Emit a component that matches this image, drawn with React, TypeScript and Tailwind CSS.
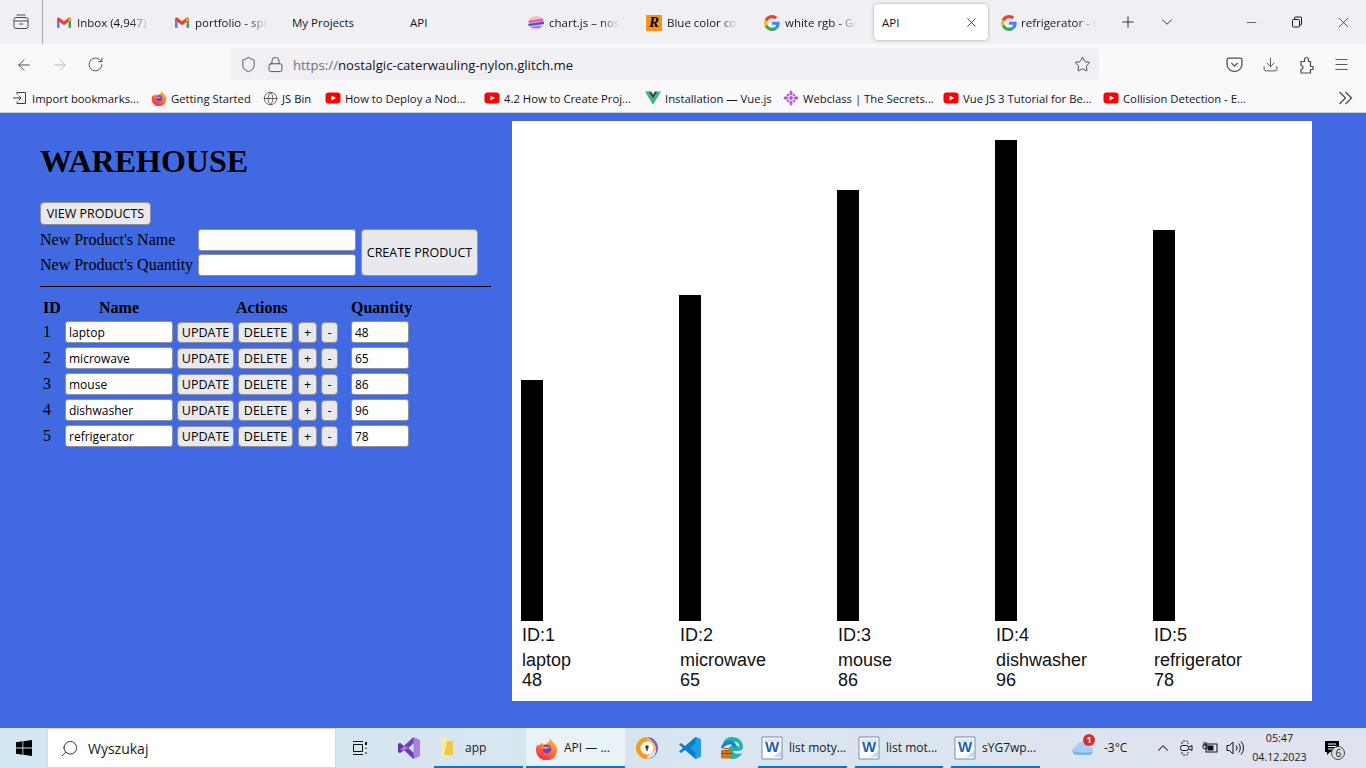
import React from "react";
import {
  ArrowLeft,
  ArrowRight,
  RotateCw,
  Shield,
  Lock,
  Star,
  Download,
  Menu,
  X,
  Plus,
  ChevronDown,
  ChevronUp,
  Minus,
  Globe,
  Search,
} from "lucide-react";

const products = [
  { id: 1, name: "laptop", quantity: 48, barHeight: "h-[241px]" },
  { id: 2, name: "microwave", quantity: 65, barHeight: "h-[326px]" },
  { id: 3, name: "mouse", quantity: 86, barHeight: "h-[431px]" },
  { id: 4, name: "dishwasher", quantity: 96, barHeight: "h-[481px]" },
  { id: 5, name: "refrigerator", quantity: 78, barHeight: "h-[391px]" },
];

const btn = "shrink-0 border border-[#8f8f9d] rounded-[4px] bg-[#e9e9ed] pt-[2px] font-['Open_Sans',sans-serif] text-black text-[12.5px] leading-none";
const field = "shrink-0 border border-[#8f8f9d] rounded-[3px] bg-white font-['Open_Sans',sans-serif] text-black text-[12px] px-[3px] outline-none";

function Gmail() {
  return (
    <svg width="16" height="16" viewBox="0 0 16 16" className="shrink-0">
      <path d="M1 13V4.500L3.500 5V13H2a1 1 0 0 1-1-1z" fill="#4285f4" />
      <path d="M12.500 13V5l2.500-.5V12a1 1 0 0 1-1 1z" fill="#34a853" />
      <path d="M1 5V4c0-1.300 1.500-2 2.500-1.200L8 6.300l4.500-3.500C13.500 2 15 2.700 15 4v1l-2.500 2L8 10.300 3.500 7z" fill="#ea4335" />
      <path d="M12.500 2.800 15 4v1l-2.500 2z" fill="#fbbc04" />
    </svg>
  );
}

function GoogleG() {
  return (
    <svg width="16" height="16" viewBox="0 0 48 48" className="shrink-0">
      <path fill="#ea4335" d="M24 9.500c3.500 0 6.700 1.200 9.200 3.600l6.900-6.900C35.900 2.400 30.500 0 24 0 14.600 0 6.500 5.400 2.600 13.200l8 6.200C12.400 13.700 17.700 9.500 24 9.500z" />
      <path fill="#4285f4" d="M47 24.500c0-1.600-.1-3.100-.4-4.500H24v9h13c-.6 3-2.300 5.500-4.800 7.200l7.700 6C44.400 38 47 31.800 47 24.500z" />
      <path fill="#fbbc05" d="M10.500 28.600c-.5-1.400-.8-3-.8-4.600s.3-3.200.8-4.600l-8-6.200C.9 16.500 0 20.100 0 24s.9 7.500 2.600 10.800z" />
      <path fill="#34a853" d="M24 48c6.500 0 11.900-2.100 15.900-5.800l-7.700-6c-2.200 1.500-5 2.300-8.200 2.300-6.300 0-11.600-4.200-13.500-10l-8 6.200C6.500 42.600 14.600 48 24 48z" />
    </svg>
  );
}

function YouTube() {
  return (
    <svg width="16" height="16" viewBox="0 0 16 16" className="shrink-0">
      <rect x="0.500" y="2.500" width="15" height="11" rx="3" fill="#ff0000" />
      <path d="M6.500 5.500v5L11 8z" fill="#fff" />
    </svg>
  );
}

function FirefoxLogo({ size = 16, id }: { size?: number; id: string }) {
  return (
    <svg width={size} height={size} viewBox="0 0 24 24" className="shrink-0">
      <defs>
        <linearGradient id={id} x1="0.800" y1="0" x2="0.200" y2="1">
          <stop offset="0" stopColor="#ffc32e" />
          <stop offset="0.450" stopColor="#ff7a2f" />
          <stop offset="1" stopColor="#f0245e" />
        </linearGradient>
      </defs>
      <path d="M15.500 0.500c.5 2.500 2 3.500 3.500 5 2.500 2.500 4 5 4 8a11 11 0 0 1-22 0c0-2.500.7-4.500 2-6 .2 1 .5 1.500 1 2 .8-2 2-3 4-3.500-.5 1-.5 1.500 0 2 3-.5 5-1 6.500-3 .7-1.300 1-3 1-4.500z" fill={`url(#${id})`} />
      <circle cx="12.500" cy="12.500" r="4.500" fill="#6a3fc9" />
      <path d="M5.500 10c2 .5 3.500.5 5.500.2 2-.3 4-.2 5.500 1.800-1.500-.5-2.500-.5-3.500 0-2 1-5.500.5-7.500-2z" fill="#ffa436" />
      <path d="M17 15c-1 2.500-3 3.500-5 3.500-2.500 0-4.500-1.500-5-3.500 2 2 6.500 2.500 10 0z" fill="#ff5a3c" />
    </svg>
  );
}

function WordIcon() {
  return (
    <svg width="22" height="24" viewBox="0 0 22 24" className="shrink-0">
      <path d="M1 1h20v22H1z" fill="#fdfdff" stroke="#6f8fbd" />
      <path d="M3 3h16v3H3z" fill="#dbe6f5" />
      <path d="M12 21l8-6v6z" fill="#cfd8e6" />
      <text x="11" y="16" textAnchor="middle" fontSize="15" fontWeight="700" fontFamily="Liberation Sans" fill="#2660b5">W</text>
    </svg>
  );
}

function PuzzleIcon() {
  return (
    <svg width="16" height="18" viewBox="0 0 16 18" fill="none" stroke="currentColor" strokeWidth="1.200">
      <path d="M3 5.500h3.500V3.500a2 2 0 0 1 4 0v2h2v5H15v3h-2.500v3.500H3v-3.500a2 2 0 0 0 0-4z" />
    </svg>
  );
}

const tabs = [
  { key: "inbox", icon: <Gmail />, label: "Inbox (4,947) -", fade: true },
  { key: "portfolio", icon: <Gmail />, label: "portfolio - sph", fade: true },
  { key: "projects", icon: null, label: "My Projects", fade: false },
  { key: "api1", icon: null, label: "API", fade: false },
  {
    key: "chart",
    icon: (
      <svg width="16" height="16" viewBox="0 0 16 16" className="shrink-0">
        <ellipse cx="8" cy="8" rx="8" ry="7" fill="#f3c1d8" />
        <path d="M1 5.500 15 3.500v2.500L1 8z" fill="#ef5b8f" />
        <path d="M0 9l16-2.500v2.500L1 11z" fill="#4a4fe0" />
        <path d="M3 12l10-1.500-1 2.500H4z" fill="#7c83f0" />
      </svg>
    ),
    label: "chart.js – nost",
    fade: true,
  },
  {
    key: "blue",
    icon: (
      <span className="flex h-4 w-4 shrink-0 items-center justify-center bg-[#f7941e] font-['Liberation_Serif'] text-[15px] font-bold italic leading-none text-black">
        R
      </span>
    ),
    label: "Blue color coc",
    fade: true,
  },
  { key: "white", icon: <GoogleG />, label: "white rgb - Go", fade: true },
];

const bookmarks = [
  { key: "import", w: "w-[139px]", label: "Import bookmarks...", icon: <svg width="16" height="16" viewBox="0 0 16 16" fill="none" stroke="#3a3a44" strokeWidth="1" className="shrink-0"><path d="M5 2.500h8.500v11H5M5 4.500v-2M5 13.500v-2M1 8h8M6.500 5.500 9 8l-2.500 2.500" /></svg> },
  { key: "started", w: "w-[112px]", label: "Getting Started", icon: <FirefoxLogo id="ff-bookmark" /> },
  { key: "jsbin", w: "w-[62px]", label: "JS Bin", icon: <Globe size={15} strokeWidth={1.2} className="shrink-0 text-[#3a3a44]" /> },
  { key: "deploy", w: "w-[159px]", label: "How to Deploy a Nod...", icon: <YouTube /> },
  { key: "create", w: "w-[161px]", label: "4.2 How to Create Proj...", icon: <YouTube /> },
  {
    key: "vue",
    w: "w-[138px]",
    label: "Installation — Vue.js",
    icon: (
      <svg width="16" height="16" viewBox="0 0 16 16" className="shrink-0">
        <path d="M0 1.500h3.500L8 9l4.500-7.500H16L8 15z" fill="#41b883" />
        <path d="M3.500 1.500h2.700L8 4.500l1.800-3h2.700L8 9z" fill="#35495e" />
      </svg>
    ),
  },
  {
    key: "webclass",
    w: "w-[160px]",
    label: "Webclass | The Secrets...",
    icon: (
      <svg width="16" height="16" viewBox="0 0 16 16" fill="#b35fd6" className="shrink-0">
        <ellipse cx="8" cy="3" rx="1.600" ry="2.500" />
        <ellipse cx="8" cy="13" rx="1.600" ry="2.500" />
        <ellipse cx="8" cy="8" rx="2" ry="2" />
        <ellipse cx="3" cy="8" rx="2.500" ry="1.800" />
        <ellipse cx="13" cy="8" rx="2.500" ry="1.800" />
        <circle cx="5" cy="5" r="1.300" />
        <circle cx="11" cy="5" r="1.300" />
        <circle cx="5" cy="11" r="1.300" />
        <circle cx="11" cy="11" r="1.300" />
      </svg>
    ),
  },
  { key: "vue3", w: "w-[160px]", label: "Vue JS 3 Tutorial for Be...", icon: <YouTube /> },
  { key: "collision", w: "w-[160px]", label: "Collision Detection - E...", icon: <YouTube /> },
];

function TabStrip() {
  return (
    <div className="flex h-[44px] items-center bg-[#f0f0f4] text-[11.5px] text-[#15141a]">
      <div className="flex h-full w-[43px] shrink-0 items-center justify-center border-r border-[#a9a9ad]">
        <svg width="16" height="16" viewBox="0 0 16 16" fill="none" stroke="#4a4a55" strokeWidth="1">
          <rect x="1" y="3.500" width="14" height="11" rx="2" />
          <path d="M3.500 1h9M1 7h14M6 10h4" />
        </svg>
      </div>
      {tabs.map((t) => (
        <div key={t.key} className="flex h-full w-[118px] shrink-0 items-center gap-[5px] pl-[13px] pt-[1px]">
          {t.icon}
          <span className={t.fade ? "whitespace-nowrap [mask-image:linear-gradient(to_right,black_70%,transparent_95%)]" : "whitespace-nowrap"}>
            {t.label}
          </span>
        </div>
      ))}
      <div className="ml-[5px] flex h-[36px] w-[114px] shrink-0 items-center justify-between rounded-[4px] bg-white pl-[8px] pr-[9px] pt-[1px] shadow-[0_0_3px_rgba(0,0,0,0.35)]">
        <span>API</span>
        <X size={15} strokeWidth={1.2} />
      </div>
      <div className="flex h-full w-[118px] shrink-0 items-center gap-[4px] pl-[13px] pt-[1px]">
        <GoogleG />
        <span className="whitespace-nowrap [mask-image:linear-gradient(to_right,black_70%,transparent_95%)]">refrigerator - G</span>
      </div>
      <div className="ml-[2px] flex w-[40px] justify-center"><Plus size={18} strokeWidth={1.1} /></div>
      <div className="flex w-[38px] justify-center"><ChevronDown size={18} strokeWidth={1.1} /></div>
      <div className="ml-auto flex items-center">
        <div className="flex w-[46px] justify-center"><Minus size={15} strokeWidth={1} /></div>
        <div className="flex w-[46px] justify-center">
          <svg width="12" height="12" viewBox="0 0 12 12" fill="none" stroke="#15141a" strokeWidth="1">
            <rect x="1.500" y="3.500" width="7" height="7.500" rx="1" />
            <path d="M3.500 3.500V2a1 1 0 0 1 1-1h5a1 1 0 0 1 1 1v6a1 1 0 0 1-1 1h-1" />
          </svg>
        </div>
        <div className="flex w-[46px] justify-center"><X size={17} strokeWidth={1} /></div>
      </div>
    </div>
  );
}

function NavBar() {
  return (
    <div className="flex h-[40px] items-center bg-[#f9f9fb] text-[#4a4a55]">
      <div className="flex w-[231px] shrink-0 items-center pl-[15px] pt-[1px]">
        <ArrowLeft size={18} strokeWidth={1.3} />
        <ArrowRight size={18} strokeWidth={1.3} className="ml-[18px] text-[#b8b8be]" />
        <RotateCw size={17} strokeWidth={1.3} className="ml-[18px]" />
      </div>
      <div className="flex h-[32px] w-[868px] shrink-0 items-center rounded-[4px] bg-[#f0f0f4] pl-[9px] pr-[8px] pt-[1px]">
        <Shield size={17} strokeWidth={1.3} />
        <Lock size={17} strokeWidth={1.3} className="ml-[10px]" />
        <span className="ml-[9px] pt-[2px] text-[13.2px] text-[#15141a]">
          <span className="text-[#6f6f78]">https://</span>nostalgic-caterwauling-nylon.glitch.me
        </span>
        <Star size={17} strokeWidth={1.3} className="ml-auto text-[#3a3a44]" />
      </div>
      <div className="ml-auto flex items-center gap-[19px] pr-[16px] pt-[1px]">
        <svg width="17" height="17" viewBox="0 0 16 16" fill="none" stroke="currentColor" strokeWidth="1.200">
          <path d="M2.500 2h11A1.500 1.500 0 0 1 15 3.500V8a7 6.500 0 0 1-14 0V3.500A1.500 1.500 0 0 1 2.500 2z" />
          <path d="M5 6.500 8 9.500l3-3" />
        </svg>
        <Download size={17} strokeWidth={1.3} />
        <PuzzleIcon />
        <Menu size={17} strokeWidth={1.3} />
      </div>
    </div>
  );
}

function BookmarkBar() {
  return (
    <div className="flex h-[29px] items-center border-b border-[#cfcfd8] bg-[#f9f9fb] pl-[12px] text-[11.3px] text-[#15141a]">
      {bookmarks.map((b) => (
        <div key={b.key} className={`flex shrink-0 items-center gap-[4px] whitespace-nowrap ${b.w}`}>
          {b.icon}
          <span className="pt-[2px]">{b.label}</span>
        </div>
      ))}
      <svg width="15" height="14" viewBox="0 0 15 14" fill="none" stroke="#4a4a55" strokeWidth="1.300" className="ml-auto mr-[13px]">
        <path d="M1.500 1 7.500 7l-6 6M7.500 1l6 6-6 6" />
      </svg>
    </div>
  );
}

function Warehouse() {
  return (
    <div className="w-[472px] shrink-0 pl-[40px] font-['Liberation_Serif',serif] text-[16px] text-black">
      <h1 className="mt-[30px] text-[32px] font-bold leading-[36px]">WAREHOUSE</h1>
      <button className={`${btn} mt-[23px] block h-[23px] w-[111px]`}>VIEW PRODUCTS</button>
      <div className="mt-[4px] flex h-[47px]">
        <div className="flex w-[158px] shrink-0 flex-col justify-between leading-[22px]">
          <span>New Product's Name</span>
          <span>New Product's Quantity</span>
        </div>
        <div className="flex w-[158px] shrink-0 flex-col justify-between">
          <input className={`${field} h-[22px] w-full`} />
          <input className={`${field} h-[22px] w-full`} />
        </div>
        <button className={`${btn} ml-[5px] h-[47px] w-[117px]`}>CREATE PRODUCT</button>
      </div>
      <hr className="mt-[10px] w-[451px] border-black" />
      <div className="ml-[3px] mt-[12px] flex h-[18px] font-bold leading-[18px]">
        <span className="w-[56px]">ID</span>
        <span className="w-[137px]">Name</span>
        <span className="w-[115px]">Actions</span>
        <span>Quantity</span>
      </div>
      <div className="mt-[4px] flex flex-col gap-[4px]">
        {products.map((p) => (
          <div key={p.id} className="flex h-[22px] items-center">
            <span className="w-[25px] pl-[3px] leading-[18px]">{p.id}</span>
            <input className={`${field} h-[22px] w-[108px]`} defaultValue={p.name} />
            <button className={`${btn} ml-[4px] h-[21px] w-[57px] self-end`}>UPDATE</button>
            <button className={`${btn} ml-[4px] h-[21px] w-[55px] self-end`}>DELETE</button>
            <button className={`${btn} ml-[5px] h-[21px] w-[19px] self-end`}>+</button>
            <button className={`${btn} ml-[4px] h-[21px] w-[17px] self-end`}>-</button>
            <input className={`${field} ml-[13px] h-[22px] w-[58px]`} defaultValue={p.quantity} />
          </div>
        ))}
      </div>
    </div>
  );
}

function Chart() {
  return (
    <div className="mt-[8px] flex h-[580px] w-[800px] shrink-0 bg-white pl-[9px] font-['Liberation_Sans',sans-serif] text-[18px] leading-[20px] text-[#111]">
      {products.map((p) => (
        <div key={p.id} className="flex w-[158px] shrink-0 flex-col">
          <div className="flex h-[500px] items-end">
            <div className={`w-[22px] bg-black ${p.barHeight}`} />
          </div>
          <div className="mt-[3px] pl-[1px] leading-[22px]">ID:{p.id}</div>
          <div className="mt-[3px] pl-[1px] leading-[22px]">{p.name}</div>
          <div className="pl-[1px] leading-[18px]">{p.quantity}</div>
        </div>
      ))}
    </div>
  );
}

function TaskItem({ icon, label, w, pl, active }: { icon: React.ReactNode; label: string; w: string; pl: string; active?: boolean }) {
  return (
    <div className={`relative flex h-full shrink-0 items-center gap-[6px] ${pl} ${w} ${active ? "bg-[#e9f2f7]" : ""}`}>
      {icon}
      <span className="whitespace-nowrap">{label}</span>
      <div className="absolute bottom-0 left-0 right-0 h-[2px] bg-[#0078d4]" />
    </div>
  );
}

function Taskbar() {
  return (
    <div className="flex h-[40px] items-center bg-gradient-to-r from-[#d2e7ef] to-[#dfe3ef] font-['Open_Sans',sans-serif] text-[12px] text-[#1a1a1a]">
      <div className="flex w-[47px] shrink-0 justify-center">
        <svg width="16" height="16" viewBox="0 0 16 16" fill="#000">
          <path d="M0 2.200 6.500 1.300v6.300H0zM7.300 1.200 16 0v7.600H7.300zM0 8.400h6.500v6.300L0 13.800zM7.300 8.400H16V16l-8.700-1.200z" />
        </svg>
      </div>
      <div className="flex h-full w-[289px] shrink-0 items-center gap-[9px] border border-[#d5d9dd] bg-white pl-[12px] text-[14px]">
        <Search size={19} strokeWidth={1.1} className="-scale-x-100" />
        Wyszukaj
      </div>
      <div className="flex w-[47px] shrink-0 justify-center">
        <svg width="16" height="16" viewBox="0 0 16 16" fill="none" stroke="#111" strokeWidth="1">
          <path d="M1 1.500h10M1 14.500h10M1.500 4.500h9v7h-9z" />
          <path d="M14 2v3" strokeWidth="2" />
          <path d="M14 7.500v1.500M14 12v2" />
        </svg>
      </div>
      <div className="flex w-[51px] shrink-0 justify-center">
        <svg width="24" height="24" viewBox="0 0 24 24">
          <path d="M16.500 1 23 4v16l-6.500 3-9.500-9-4 3-2-1V8l2-1 4 3z" fill="#a97fe6" />
          <path d="M16.500 1v6l-5 5-4.500-2z" fill="#7442b8" />
          <path d="M1 8l2-1 4 3-4 4 4 0-4 3-2-1z" fill="#68339f" />
          <path d="M7 14 16.500 23v-6l-5-5z" fill="#6e3cb0" />
          <path d="M16.500 7.500v9l-5-4.500z" fill="#d2e7ef" />
        </svg>
      </div>
      <TaskItem
        w="w-[89px]"
        pl="pl-[6px]"
        label="app"
        icon={
          <svg width="14" height="22" viewBox="0 0 14 22" className="mr-[5px] shrink-0">
            <path d="M1 1h7l2 3v14l-6 3-3-1z" fill="#fbe9a8" />
            <path d="M7 4h6v14H4z" fill="#f2c94f" />
          </svg>
        }
      />
      <div className="w-[3px] shrink-0" />
      <TaskItem w="w-[99px]" pl="pl-[9px]" active label="API — ..." icon={<FirefoxLogo size={23} id="ff-task" />} />
      <div className="flex w-[44px] shrink-0 justify-center">
        <svg width="24" height="24" viewBox="0 0 24 24">
          <path d="M12 1a11 11 0 0 0 0 22z" fill="#f59a23" />
          <path d="M12 1a11 11 0 0 1 0 22c4-1 8-2 9-8 .5-5-2-9-9-14z" fill="#7b5cd6" />
          <path d="M12 1c6 4 9 8 9 13-4 2-7 4-9 9V1z" fill="#f8b84a" />
          <circle cx="12" cy="12" r="6.500" fill="#fff" />
          <circle cx="12" cy="11" r="1.800" fill="#333" />
          <path d="M11.300 12h1.400v3h-1.400z" fill="#333" />
        </svg>
      </div>
      <div className="flex w-[42px] shrink-0 justify-center">
        <svg width="24" height="24" viewBox="0 0 24 24">
          <path d="M17.500 1 23 3.500v17L17.500 23 7 14l-4 3-2-1.500L5 12 1 8.500 3 7l4 3z" fill="#0b7fc7" />
          <path d="M17.500 1 23 3.500v17L17.500 23V16.500L12 12l5.500-4.500z" fill="#1f9fe6" />
        </svg>
      </div>
      <div className="flex w-[42px] shrink-0 justify-center">
        <svg width="24" height="24" viewBox="0 0 24 24">
          <path d="M12 1c6 0 11 4 11 10 0 3-3 4-5 4h-5c1 3 5 4 9 2-2 4-6 6-9 6-3 0-5-1-7-3V14h2c1-3 4-6 8-5 2 .5 3 1.500 3 3 1-2 0-5-3-6-4-1-9 0-13 3C3 4 7 1 12 1z" fill="#23b3a6" />
          <path d="M1 12C2 6 8 4 12 5c3 1 4.500 3 4 6h-3c-.5-2-2-3-4-2.500-3 .5-5 2-5.500 4H2z" fill="#1b7fd0" />
          <rect x="1" y="14" width="11" height="8.500" rx="1" fill="#c9781f" />
          <rect x="5" y="12.500" width="3" height="2" fill="none" stroke="#8a5212" />
          <path d="M1 17.500h11" stroke="#8a5212" />
        </svg>
      </div>
      <div className="w-[5px] shrink-0" />
      <TaskItem w="w-[89px]" pl="pl-[3px]" label="list moty..." icon={<WordIcon />} />
      <div className="w-[8px] shrink-0" />
      <TaskItem w="w-[88px]" pl="pl-[3px]" label="list mot..." icon={<WordIcon />} />
      <div className="w-[8px] shrink-0" />
      <TaskItem w="w-[89px]" pl="pl-[3px]" label="sYG7wp..." icon={<WordIcon />} />
      <div className="relative ml-[31px] flex shrink-0 items-center gap-[9px]">
        <svg width="24" height="18" viewBox="0 0 24 18">
          <path d="M6 16a4.500 4.500 0 0 1-.5-9 6.500 6.500 0 0 1 12.500 1 4 4 0 0 1 0 8z" fill="#a9cdf0" />
          <path d="M1.500 12a4.500 4.500 0 0 0 4.500 4h12a4 4 0 0 0 3.800-3c-6 1-14 1-20.300-1z" fill="#7eb3e6" />
        </svg>
        <span className="absolute left-[12px] top-[-5px] flex h-[12px] w-[12px] items-center justify-center rounded-full bg-[#d32f2f] text-[9px] font-bold text-white">1</span>
        <span>-3°C</span>
      </div>
      <ChevronUp size={18} strokeWidth={1.4} className="ml-[27px] shrink-0" />
      <svg width="14" height="16" viewBox="0 0 14 16" fill="none" stroke="#111" className="ml-[7px] shrink-0">
        <path d="M3 4V2.500A1.500 1.500 0 0 1 4.500 1h3A1.500 1.500 0 0 1 9 2.500V4M3 12v1.500A1.500 1.500 0 0 0 4.500 15h3A1.500 1.500 0 0 0 9 13.500V12" strokeDasharray="2 1" />
        <rect x="1.500" y="5.500" width="8" height="5" rx="2" />
        <path d="M10 7l3-1.500v5L10 9" />
      </svg>
      <svg width="16" height="14" viewBox="0 0 16 14" className="ml-[9px] shrink-0">
        <rect x="4" y="3" width="11" height="8" fill="none" stroke="#111" />
        <rect x="5.500" y="4.500" width="6" height="5" fill="#111" />
        <path d="M2 1v3M4 1v3M1 4h4v2a2 2 0 0 1-4 0z" fill="none" stroke="#111" />
      </svg>
      <svg width="18" height="16" viewBox="0 0 18 16" fill="none" stroke="#111" strokeWidth="1" className="ml-[8px] shrink-0">
        <path d="M1 5.500h2.500L7 2v12L3.500 10.500H1zM10 5.500a3.500 3.500 0 0 1 0 5M12.500 3.500a6.500 6.500 0 0 1 0 9M15 1.500a9.500 9.500 0 0 1 0 13" />
      </svg>
      <div className="ml-[3px] flex w-[64px] shrink-0 flex-col items-center text-[10.7px] leading-[19px]">
        <span>05:47</span>
        <span>04.12.2023</span>
      </div>
      <div className="relative ml-[13px] shrink-0">
        <svg width="16" height="16" viewBox="0 0 16 16">
          <path d="M1 1h14v11H6l-3 3v-3H1z" fill="#000" />
          <path d="M4 4h8M4 6.500h8M4 9h6" stroke="#fff" />
        </svg>
        <span className="absolute left-[7px] top-[6px] flex h-[14px] w-[14px] items-center justify-center rounded-full border border-[#444] bg-[#d9dee6] text-[10px]">6</span>
      </div>
    </div>
  );
}

export default function App() {
  return (
    <div className="flex h-[768px] w-[1366px] flex-col overflow-hidden font-['Open_Sans',sans-serif]">
      <TabStrip />
      <NavBar />
      <BookmarkBar />
      <div className="flex h-[615px] bg-[#4169e1]">
        <Warehouse />
        <div className="w-[40px] shrink-0" />
        <Chart />
      </div>
      <Taskbar />
    </div>
  );
}
